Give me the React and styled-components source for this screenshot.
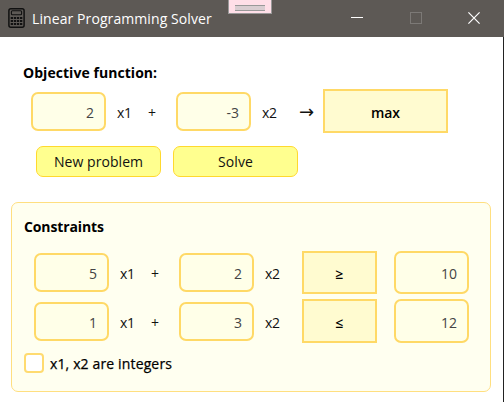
import React from 'react';
import styled, { createGlobalStyle } from 'styled-components';

const GlobalStyle = createGlobalStyle`
  * { box-sizing: border-box; }
  body { margin: 0; background: #fff; }
  input, button { font: inherit; margin: 0; outline: none; }
`;

const Window = styled.div`
  position: relative;
  width: 504px;
  height: 402px;
  overflow: hidden;
  display: flex;
  flex-direction: column;
  background: #fff;
  color: #111;
  font: 14px/20px 'Open Sans', 'Noto Sans', sans-serif;
`;

const TitleBar = styled.header`
  height: 37px;
  flex: none;
  display: flex;
  align-items: center;
  padding: 0 0 1px 8px;
  background: #5d5955;
  color: #fff;
`;

const Title = styled.div`
  flex: 1;
  margin-left: 7px;
  padding-top: 2px;
  white-space: nowrap;
  letter-spacing: 0.09px;
`;

const WindowButtons = styled.div`
  display: flex;
  gap: 46.5px;
  margin-right: 24px;
  svg { display: block; }
`;

const DockHandle = styled.div`
  position: absolute;
  left: 228px;
  top: -1px;
  width: 44px;
  height: 15px;
  padding: 5px 6px 0;
  border: 1px solid #999;
  background: #ffdfe8;
  &::after {
    content: '';
    display: block;
    height: 4px;
    background: #d9cdd1;
    border: solid #999;
    border-width: 1px 0;
  }
`;

const Body = styled.main`
  flex: 1;
  display: flex;
  flex-direction: column;
  border-right: 1px solid #222;
`;

const Heading = styled.h2`
  margin: ${(p) => p.$margin};
  font-size: 14px;
  line-height: 20px;
  font-weight: 700;
  color: #000;
  letter-spacing: ${(p) => p.$spacing};
  white-space: nowrap;
`;

const Row = styled.div`
  display: grid;
  grid-template-columns: ${(p) => p.$columns};
  height: 44px;
  align-items: center;
  margin: ${(p) => p.$margin};
`;

const NumberField = styled.input`
  width: 75px;
  height: ${(p) => p.$height || 39}px;
  border: 2px solid #ffd966;
  border-radius: 7px;
  background: #ffffe8;
  color: #444;
  text-align: right;
  padding: 2px 10px 0 4px;
`;

const Term = styled.span`
  padding-left: 11px;
  padding-top: 3px;
  letter-spacing: -0.4px;
  white-space: nowrap;
`;

const Arrow = styled(Term)`
  padding: 2px 0 0 9px;
  font-family: 'DejaVu Sans', sans-serif;
  font-size: 18px;
  letter-spacing: 0;
`;

const Choice = styled.button`
  width: ${(p) => p.$width}px;
  height: ${(p) => p.$height || 44}px;
  border: 2px solid #ffd966;
  background: #fffbd0;
  color: #000;
  font-weight: 600;
  padding: 3px 0 0;
`;

const Actions = styled.div`
  display: flex;
  gap: 12px;
  margin: 13px 0 0 36px;
`;

const ActionButton = styled.button`
  width: 125px;
  height: 31px;
  border: 1px solid #ffd92e;
  border-radius: 7px;
  background: #ffff8f;
  color: #111;
  padding: 0;
  letter-spacing: 0.06px;
`;

const Panel = styled.section`
  margin: 25px 12px 0 11px;
  height: 190px;
  border: 1px solid #ffdf80;
  border-radius: 7px;
  background: #fffff0;
`;

const CheckLabel = styled.label`
  display: flex;
  align-items: center;
  gap: 6px;
  margin: 9px 0 0 12px;
  color: #000;
  letter-spacing: 0.14px;
  -webkit-text-stroke: 0.25px #000;
`;

const CheckText = styled.span`
  padding-top: 2px;
`;

const CheckBox = styled.input`
  appearance: none;
  width: 20px;
  height: 20px;
  border: 2px solid #ffdb70;
  border-radius: 4px;
  background: #fff;
`;

const CalculatorIcon = () => (
  <svg width="17" height="20" viewBox="0 0 17 20" fill="none">
    <rect x="0.9" y="0.8" width="15.2" height="18.4" rx="2" stroke="#111" strokeWidth="1.5" />
    <rect x="3.4" y="2.8" width="10.2" height="4" rx="1" stroke="#111" strokeWidth="1.1" />
    {[9, 12, 15].map((y) =>
      [2.7, 5.8, 8.9, 12].map((x) => (
        <rect key={`${x}-${y}`} x={x} y={y} width="2.3" height="2" fill="#111" />
      ))
    )}
  </svg>
);

const constraints = [
  { a: '5', b: '2', relation: '≥', limit: '10', height: 43, margin: '13px 0 0 22px' },
  { a: '1', b: '3', relation: '≤', limit: '12', height: 44, margin: '5px 0 0 22px' },
];

export default function App() {
  return (
    <>
      <GlobalStyle />
      <Window>
        <TitleBar>
          <CalculatorIcon />
          <Title>Linear Programming Solver</Title>
          <WindowButtons>
            <svg width="12" height="12"><path d="M0 5.5H12" stroke="#fff" /></svg>
            <svg width="12" height="12"><rect x=".5" y=".5" width="11" height="11" fill="none" stroke="#7c7976" /></svg>
            <svg width="12" height="12"><path d="M.4.4 11.6 11.6M11.6.4.4 11.6" stroke="#fff" strokeWidth="1.2" /></svg>
          </WindowButtons>
          <DockHandle />
        </TitleBar>
        <Body>
          <Heading $margin="26px 0 0 23px" $spacing="0.05px">Objective function:</Heading>
          <Row $columns="75px 31px 39px 75px 39px 33px 125px" $margin="6px 0 0 31px">
            <NumberField defaultValue="2" />
            <Term>x1</Term>
            <Term>+</Term>
            <NumberField defaultValue="-3" />
            <Term>x2</Term>
            <Arrow>→</Arrow>
            <Choice $width={125}>max</Choice>
          </Row>
          <Actions>
            <ActionButton>New problem</ActionButton>
            <ActionButton>Solve</ActionButton>
          </Actions>
          <Panel>
            <Heading $margin="14px 0 0 12px" $spacing="-0.12px">Constraints</Heading>
            {constraints.map((c) => (
              <Row key={c.limit} $columns="75px 31px 39px 75px 48px 92px 75px" $margin={c.margin}>
                <NumberField defaultValue={c.a} />
                <Term>x1</Term>
                <Term>+</Term>
                <NumberField defaultValue={c.b} />
                <Term>x2</Term>
                <Choice $width={75} $height={c.height}>{c.relation}</Choice>
                <NumberField $height={c.height} defaultValue={c.limit} />
              </Row>
            ))}
            <CheckLabel>
              <CheckBox type="checkbox" />
              <CheckText>x1, x2 are integers</CheckText>
            </CheckLabel>
          </Panel>
        </Body>
      </Window>
    </>
  );
}
